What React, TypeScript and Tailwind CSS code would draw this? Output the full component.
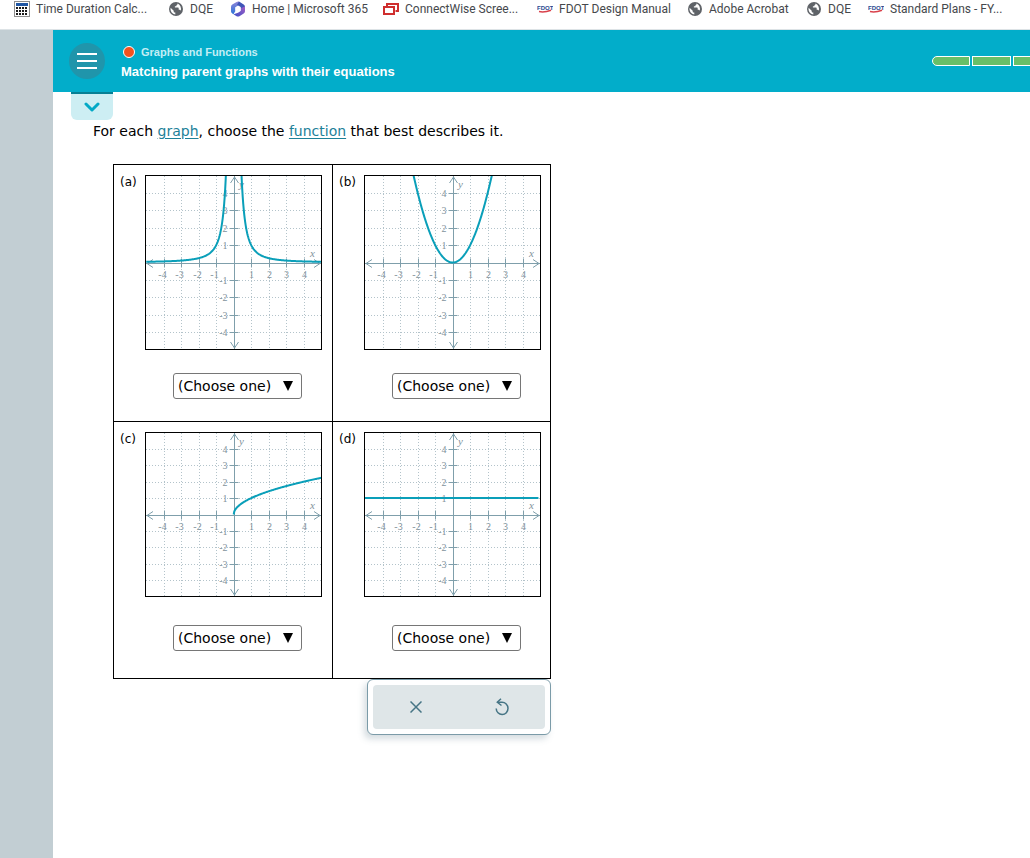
import { useState } from "react";
import type { ReactNode } from "react";

const GlobeIcon = () => (
  <svg viewBox="0 0 14 14" className="size-[14px]">
    <circle cx="7" cy="7" r="7" fill="#5f6368" />
    <path
      d="M8.600 1.600Q8.800 2.800 7.600 3.100L7.300 4.300H5.900V5.600H9q.7 0 .7.800v1.400h.8q.8 0 1.100.9A5.600 5.600 0 0 0 8.600 1.600Z"
      fill="#fff"
    />
    <path d="M1.600 5.700 4.700 8.700v.8q0 .9.900.9h.700v2.100A5.600 5.600 0 0 1 1.600 5.700Z" fill="#fff" />
  </svg>
);

const CalculatorIcon = () => (
  <svg viewBox="0 0 16 16" className="size-4">
    <rect x="0.5" y="0.5" width="15" height="15" fill="#fff" stroke="#8f8f8f" />
    <rect x="2" y="2" width="12" height="3" fill="#1f57a5" />
    {[6, 9, 12].map((y) =>
      [2, 5, 8, 11].map((x) => <rect key={`${x}-${y}`} x={x} y={y} width="2" height="2" fill="#1c1c1c" />)
    )}
  </svg>
);

const MicrosoftIcon = () => (
  <svg viewBox="0 0 14 16" className="h-4 w-[14px]">
    <defs>
      <linearGradient id="ms-a" x1="0" y1="0" x2="0" y2="1">
        <stop offset="0" stopColor="#8f84d8" />
        <stop offset="1" stopColor="#2b74d8" />
      </linearGradient>
      <linearGradient id="ms-b" x1="0" y1="1" x2="1" y2="0">
        <stop offset="0" stopColor="#3a4fc8" />
        <stop offset="1" stopColor="#a45ec4" />
      </linearGradient>
    </defs>
    <path d="M8 .6Q6.800.3 5.600 1L1.300 3.600Q0 4.400 0 5.900v4.300q0 1.500 1.300 2.300l1.200.7L4.400 10V6.200L8 4Z" fill="url(#ms-a)" />
    <path d="M8 .6 12.700 3.500Q14 4.300 14 5.900V9L9.600 7.600V6L6 3.800Z" fill="#3f55b8" />
    <path d="M14 6v4.200q0 1.500-1.300 2.300l-4.300 2.700q-1.400.7-2.800 0L2.500 13.200 7 11.800l2.600-1.700V7.200L14 5.500Z" fill="url(#ms-b)" />
    <path d="m4.400 6.500 2.600-1.600 2.600 1.600v3.100L7 11.200 4.400 9.600Z" fill="#fff" />
  </svg>
);

const ConnectWiseIcon = () => (
  <svg viewBox="0 0 16 14" className="h-[14px] w-4" fill="none" stroke="#cf2e2e" strokeWidth="2">
    <path d="M4 4V2h11v7h-2.500" />
    <path d="M1 5h10v7H1Z" />
  </svg>
);

const FdotIcon = () => (
  <svg viewBox="0 0 16 8" className="h-2 w-4">
    <text x="0" y="5" fontSize="6" fontWeight="700" fontFamily="Liberation Sans, sans-serif" fill="#27478f">
      FDOT
    </text>
    <path d="M2 6.600Q8 7.600 14 5.200" stroke="#d9414b" strokeWidth="1.500" fill="none" />
  </svg>
);

const bookmarks: { label: string; icon: ReactNode; width: string }[] = [
  { label: "Time Duration Calc...", icon: <CalculatorIcon />, width: "w-[116px]" },
  { label: "DQE", icon: <GlobeIcon />, width: "w-6" },
  { label: "Home | Microsoft 365", icon: <MicrosoftIcon />, width: "w-[115px]" },
  { label: "ConnectWise Scree...", icon: <ConnectWiseIcon />, width: "w-[116px]" },
  { label: "FDOT Design Manual", icon: <FdotIcon />, width: "w-[112px]" },
  { label: "Adobe Acrobat", icon: <GlobeIcon />, width: "w-[81px]" },
  { label: "DQE", icon: <GlobeIcon />, width: "w-6" },
  { label: "Standard Plans - FY...", icon: <FdotIcon />, width: "w-[112px]" },
];

const BookmarksBar = () => (
  <nav className="flex h-[30px] gap-4 overflow-hidden border-b border-[#dde3e6] bg-white pl-[14px] font-[Roboto,sans-serif] text-[12px] leading-[18px] text-[#45484c]">
    {bookmarks.map((item, i) => (
      <a key={i} href="#" className="flex h-[18px] shrink-0 items-center gap-[6px]">
        <span className="flex w-4 justify-center">{item.icon}</span>
        <span className={`whitespace-nowrap ${item.width}`}>{item.label}</span>
      </a>
    ))}
  </nav>
);

const TopicHeader = () => (
  <header className="flex h-[62px] items-center bg-[#02adca] pl-4">
    <button aria-label="Menu" className="flex size-9 shrink-0 flex-col items-center justify-center gap-[5px] rounded-full bg-[#2095ab]">
      <span className="h-[2px] w-5 bg-white" />
      <span className="h-[2px] w-5 bg-white" />
      <span className="h-[2px] w-5 bg-white" />
    </button>
    <div className="ml-4 min-w-0 grow pt-[2px] font-['Liberation_Sans',sans-serif] font-bold">
      <div className="flex items-center gap-[6px] pl-[2px] text-[11px] leading-5 text-[#c3eef5]">
        <span className="size-3 rounded-full border border-white bg-[#f4511e]" />
        Graphs and Functions
      </div>
      <h1 className="text-[13px] leading-5 text-white">Matching parent graphs with their equations</h1>
    </div>
    <div className="flex w-[98px] shrink-0 gap-[2px] overflow-hidden">
      <span className="h-[10px] w-[38px] shrink-0 rounded-l-full border border-white bg-[#68bf68]" />
      <span className="h-[10px] w-[39px] shrink-0 border border-white bg-[#68bf68]" />
      <span className="h-[10px] w-[39px] shrink-0 border border-white bg-[#68bf68]" />
    </div>
  </header>
);

const UNIT_X = 17.5;
const WIDTH = 177;
const TICKS = [-4, -3, -2, -1, 1, 2, 3, 4];

interface GraphProps {
  id: string;
  height: number;
  fn: (x: number) => number;
  // [from, to] intervals of x, drawn as separate strokes
  pieces: [number, number][];
}

const Graph = ({ id, height, fn, pieces }: GraphProps) => {
  const unitY = (height - 1) / 10;
  const cx = 89.5;
  const cy = Math.floor(height / 2) + 1.5;
  // snapped to half pixels so the one-pixel lines stay sharp
  const tickX = (n: number) => Math.floor(cx - 0.5 + n * UNIT_X) + 0.5;
  const tickY = (n: number) => Math.floor(cy - 0.5 - n * unitY) + 0.5;

  const curve = pieces
    .map(([from, to]) => {
      const points: string[] = [];
      const steps = 160;
      for (let i = 0; i <= steps; i++) {
        const x = from + ((to - from) * i) / steps;
        points.push(`${(cx - 0.8 + x * UNIT_X).toFixed(2)} ${(cy - 1 - fn(x) * unitY).toFixed(2)}`);
      }
      return `M${points.join("L")}`;
    })
    .join("");

  return (
    <svg width={WIDTH} height={height} viewBox={`0 0 ${WIDTH} ${height}`} role="img" aria-label={`Graph ${id}`}>
      <clipPath id={`clip-${id}`}>
        <rect x="1" y="1" width={WIDTH - 2} height={height - 2} />
      </clipPath>

      <g stroke="#b3c3ca" strokeDasharray="1 2">
        {TICKS.map((n) => (
          <path key={n} d={`M${tickX(n)} 1V${height - 1}M1 ${tickY(n)}H${WIDTH - 1}`} />
        ))}
      </g>

      <g stroke="#7f9fab" fill="none">
        <path d={`M1 ${cy}H${WIDTH - 1}M${cx} 1V${height - 1}`} />
        {TICKS.map((n) => (
          <path key={n} d={`M${tickX(n)} ${cy - 5}v9M${cx - 5} ${tickY(n)}h9`} />
        ))}
        <path d={`M8 ${cy - 4}L2 ${cy}L8 ${cy + 4}M${WIDTH - 8} ${cy - 4}L${WIDTH - 2} ${cy}L${WIDTH - 8} ${cy + 4}`} />
        <path d={`M${cx - 4} 8L${cx} 2L${cx + 4} 8M${cx - 4} ${height - 8}L${cx} ${height - 2}L${cx + 4} ${height - 8}`} />
      </g>

      <g fill="#82929c" fontFamily="Liberation Serif, serif" fontSize="10">
        {TICKS.map((n) => (
          <text key={n} x={tickX(n) - (n < 0 ? 2 : 0)} y={cy + 14} textAnchor="middle">
            {n}
          </text>
        ))}
        {TICKS.map((n) => (
          <text key={n} x={cx - 7} y={tickY(n) + 3} textAnchor="end">
            {n}
          </text>
        ))}
        <g fontStyle="italic" fontSize="11">
          <text x="165" y={cy - 7}>x</text>
          <text x="94" y="13">y</text>
        </g>
      </g>

      <path d={curve} stroke="#0a9fb9" strokeWidth="2" fill="none" clipPath={`url(#clip-${id})`} />
      <rect x="0.5" y="0.5" width={WIDTH - 1} height={height - 1} fill="none" stroke="#000" />
    </svg>
  );
};

const options = ["Constant", "Linear", "Square", "Cube", "Square root", "Reciprocal", "Absolute value"];

const graphs: GraphProps[] = [
  { id: "a", height: 175, fn: (x) => 1 / (x * x), pieces: [[-5, -0.4], [0.4, 5]] },
  { id: "b", height: 175, fn: (x) => x * x, pieces: [[-2.4, 2.4]] },
  { id: "c", height: 165, fn: (x) => Math.sqrt(x), pieces: [[0, 5.2]] },
  { id: "d", height: 165, fn: () => 1, pieces: [[-5.1, 4.9]] },
];

const App = () => {
  const [answers, setAnswers] = useState<Record<string, string>>({});

  return (
    <div className="flex min-h-screen flex-col bg-white">
      <BookmarksBar />
      <div className="flex grow">
        <aside className="w-[53px] shrink-0 bg-[#c2ced3]" />
        <div className="min-w-0 grow">
          <TopicHeader />

          <main className="font-['DejaVu_Sans',sans-serif] text-black">
            <button
              aria-label="Expand"
              className="ml-[18px] flex h-7 w-[42px] items-center justify-center rounded-b-md border-t-2 border-[#077f94] bg-[#cdeef3]"
            >
              <svg viewBox="0 0 16 10" className="h-[10px] w-4" fill="none" stroke="#02a9c6" strokeWidth="3">
                <path d="M2 2l6 6L14 2" strokeLinecap="round" strokeLinejoin="round" />
              </svg>
            </button>

            <div className="px-10">
              <p className="text-[14px] leading-[22px]">
                For each <a href="#" className="text-[#1d8199] underline underline-offset-2">graph</a>, choose the{" "}
                <a href="#" className="text-[#1d8199] underline underline-offset-2">function</a> that best describes it.
              </p>

              <div className="mt-[22px] ml-5 flex w-fit flex-col items-end">
                <div className="grid auto-rows-[257px] grid-cols-[219px_218px] border-t border-l border-black">
                  {graphs.map((graph) => (
                    <section key={graph.id} className="flex flex-col border-r border-b border-black pt-[10px] pl-[6px]">
                      <div className="flex">
                        <span className="w-[25px] shrink-0 text-[12px] leading-[14px]">({graph.id})</span>
                        <Graph {...graph} />
                      </div>
                      <div className="flex grow items-center pl-[53px]">
                        <div className="relative">
                          <select
                            aria-label={`Function for graph ${graph.id}`}
                            value={answers[graph.id] ?? ""}
                            onChange={(e) => setAnswers({ ...answers, [graph.id]: e.target.value })}
                            className="h-[26px] w-[129px] appearance-none rounded-[3px] border border-[#767676] bg-white pt-[2px] pl-1 text-[14px]"
                          >
                            <option value="">(Choose one)</option>
                            {options.map((option) => (
                              <option key={option}>{option}</option>
                            ))}
                          </select>
                          <svg viewBox="0 0 10 10" className="pointer-events-none absolute top-2 right-[9px] size-[10px]">
                            <path d="M0 0h10L5 10Z" />
                          </svg>
                        </div>
                      </div>
                    </section>
                  ))}
                </div>

                <div className="h-14 w-[184px] rounded-md border border-[#7b9ba8] bg-white p-[5px] shadow-[-3px_4px_6px_rgba(90,120,135,0.25)]">
                  <div className="grid h-full grid-cols-2 rounded bg-[#dfe6e8] text-[#467585]">
                    <button aria-label="Clear" onClick={() => setAnswers({})} className="flex items-center justify-center">
                      <svg viewBox="0 0 12 12" className="size-3" stroke="currentColor" strokeWidth="1.500">
                        <path d="M.5.5l11 11M11.500.5l-11 11" />
                      </svg>
                    </button>
                    <button aria-label="Undo" className="flex items-center justify-center">
                      <svg viewBox="0 0 14 18" className="h-[18px] w-[14px]" fill="none" stroke="currentColor" strokeWidth="1.500">
                        <path d="M6 .8 2.300 4.300l4.200 3.200" />
                        <path d="M2.300 4.300H7A5.900 6.100 0 1 1 1.200 10.500" />
                      </svg>
                    </button>
                  </div>
                </div>
              </div>
            </div>
          </main>
        </div>
      </div>
    </div>
  );
};

export default App;
